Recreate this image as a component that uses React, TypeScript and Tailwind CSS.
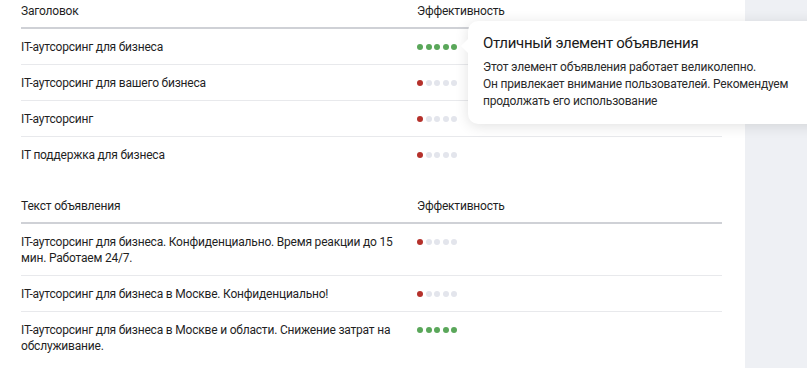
const Dots = ({ level }: { level: "good" | "bad" }) => (
  <div className="flex h-[16px] items-center gap-[2.5px]">
    {[0, 1, 2, 3, 4].map((i) => (
      <span
        key={i}
        className={
          "block h-[6px] w-[6px] rounded-full " +
          (level === "good"
            ? "bg-[#5aa75a]"
            : i === 0
            ? "bg-[#b5312b]"
            : "bg-[#e3e5ec]")
        }
      />
    ))}
  </div>
);

type Row = { text: string; level: "good" | "bad" };

const titles: Row[] = [
  { text: "IT-аутсорсинг для бизнеса", level: "good" },
  { text: "IT-аутсорсинг для вашего бизнеса", level: "bad" },
  { text: "IT-аутсорсинг", level: "bad" },
  { text: "IT поддержка для бизнеса", level: "bad" },
];

const texts: Row[] = [
  {
    text: "IT-аутсорсинг для бизнеса. Конфиденциально. Время реакции до 15 мин. Работаем 24/7.",
    level: "bad",
  },
  { text: "IT-аутсорсинг для бизнеса в Москве. Конфиденциально!", level: "bad" },
  {
    text: "IT-аутсорсинг для бизнеса в Москве и области. Снижение затрат на обслуживание.",
    level: "good",
  },
];

const Section = ({ title, rows, headH }: { title: string; rows: Row[]; headH: string }) => (
  <div>
    <div className={"flex items-center border-b-2 border-[#cfd1d6] " + headH}>
      <div className="w-[396px]">{title}</div>
      <div>Эффективность</div>
    </div>
    {rows.map((r, i) => (
      <div
        key={i}
        className={
          "flex items-start py-[9.5px] " +
          (i < rows.length - 1 ? "border-b border-[#e8e9ec]" : "")
        }
      >
        <div className="w-[396px] pr-[10px]">{r.text}</div>
        <Dots level={r.level} />
      </div>
    ))}
  </div>
);

export default function App() {
  return (
    <div
      className="relative flex h-[368px] w-[807px] overflow-hidden bg-[#eef0f4] text-[12px] leading-[16px] tracking-[-0.2px] text-[#1f1f1f]"
      style={{ fontFamily: 'Roboto, "Noto Sans", sans-serif' }}
    >
      <div className="h-full w-[745px] bg-white pl-[21px]">
        <div className="w-[701px]">
          <Section title="Заголовок" rows={titles} headH="h-[29px] pb-[5px]" />
          <div className="mt-[18px]">
            <Section title="Текст объявления" rows={texts} headH="h-[34px]" />
          </div>
        </div>
      </div>

      {/* tooltip */}
      <div className="absolute left-[468px] top-[21px] w-[360px] rounded-[10px] bg-white pb-[14px] pl-[15px] pt-[11px] shadow-[0_2px_14px_rgba(0,0,0,0.12)]">
        <span className="absolute left-[-5px] top-[20px] h-[10px] w-[10px] rotate-45 bg-white" />
        <div className="text-[15px] leading-[22px] tracking-[-0.3px] text-[#1a1a1a]">
          Отличный элемент объявления
        </div>
        <div className="mt-[5px] text-[12px] leading-[17px] text-[#2a2a2a]">
          Этот элемент объявления работает великолепно.
          <br />
          Он привлекает внимание пользователей. Рекомендуем
          <br />
          продолжать его использование
        </div>
      </div>
    </div>
  );
}
